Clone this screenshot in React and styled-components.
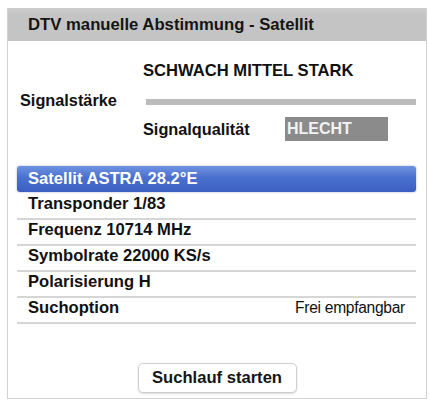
import React from "react"
import styled, { createGlobalStyle } from "styled-components"

const Global = createGlobalStyle`
  body {
    margin: 0;
    background: #ffffff;
    font-family: "Liberation Sans", Arial, sans-serif;
    color: #111111;
  }
`

const Page = styled.div`
  padding: 8px 0 0 7px;
`

const Panel = styled.div`
  width: 420px;
  height: 391px;
  box-sizing: border-box;
  border: 1px solid #d2d2d2;
  border-top: none;
  background: #ffffff;
  display: flex;
  flex-direction: column;
`

const Header = styled.div`
  height: 33px;
  background: linear-gradient(#cdcdcd, #c4c4c4 20%, #c4c4c4);
  display: flex;
  align-items: center;
  padding-left: 20px;
  font-size: 16.7px;
  font-weight: bold;
  color: #151515;
`

const SignalGrid = styled.div`
  display: grid;
  grid-template-columns: 123px 142px 1fr;
  grid-template-rows: 26px 33px 24px;
  padding: 17px 10px 0 12px;
  font-weight: bold;
  font-size: 16.3px;
`

const Scale = styled.div`
  grid-column: 2 / 4;
  align-self: center;
  font-size: 16.6px;
`

const Label = styled.div`
  grid-column: ${p => p.col};
  align-self: center;
`

const Bar = styled.div`
  grid-column: 2 / 4;
  align-self: center;
  margin: 3px 0 0 3px;
  height: 6px;
  background: #bcbcbc;
`

const QualityBox = styled.div`
  grid-column: 3;
  width: 103px;
  background: #8b8b8b;
  color: #f2f2f2;
  font-size: 16px;
  display: flex;
  align-items: center;
  padding-left: 2px;
  box-sizing: border-box;
  overflow: hidden;
`

const List = styled.div`
  margin-top: 25px;
  padding: 0 10px 0 9px;
`

const Selected = styled.div`
  height: 26px;
  margin-bottom: 2px;
  border-radius: 3px;
  background: linear-gradient(#6f93e0, #4a70cf 45%, #3a5fc2);
  box-shadow: 0 0 2px rgba(40, 70, 160, 0.5);
  color: #ffffff;
  font-size: 16.6px;
  font-weight: bold;
  display: flex;
  align-items: center;
  padding-left: 11px;
`

const Row = styled.div`
  display: flex;
  justify-content: space-between;
  padding: 1px 11px 5px 11px;
  line-height: 18px;
  border-bottom: 2px solid #d6d6d6;
  font-size: 16.6px;
  font-weight: bold;
`

const Value = styled.span`
  font-weight: normal;
  font-size: 15.6px;
  letter-spacing: -0.3px;
`

const Footer = styled.div`
  display: flex;
  justify-content: center;
  margin-top: 39px;
`

const Button = styled.button`
  width: 159px;
  height: 30px;
  background: #ffffff;
  border: 1px solid #cfcfcf;
  border-radius: 5px;
  box-shadow: 0 1px 2px rgba(0, 0, 0, 0.15);
  font-family: "Liberation Sans", Arial, sans-serif;
  font-size: 16.6px;
  font-weight: bold;
  color: #151515;
  padding: 0;
`

const rows = [
  { label: "Transponder 1/83" },
  { label: "Frequenz 10714 MHz" },
  { label: "Symbolrate 22000 KS/s" },
  { label: "Polarisierung H" },
  { label: "Suchoption", value: "Frei empfangbar" },
]

const App = () => {
  return (
    <Page>
      <Global />
      <Panel>
        <Header>DTV manuelle Abstimmung - Satellit</Header>
        <SignalGrid>
          <Scale>SCHWACH MITTEL STARK</Scale>
          <Label col={1}>Signalstärke</Label>
          <Bar />
          <Label col={2}>Signalqualität</Label>
          <QualityBox>HLECHT</QualityBox>
        </SignalGrid>
        <List>
          <Selected>Satellit ASTRA 28.2°E</Selected>
          {rows.map(r => (
            <Row key={r.label}>
              <span>{r.label}</span>
              {r.value && <Value>{r.value}</Value>}
            </Row>
          ))}
        </List>
        <Footer>
          <Button>Suchlauf starten</Button>
        </Footer>
      </Panel>
    </Page>
  )
}

export default App
